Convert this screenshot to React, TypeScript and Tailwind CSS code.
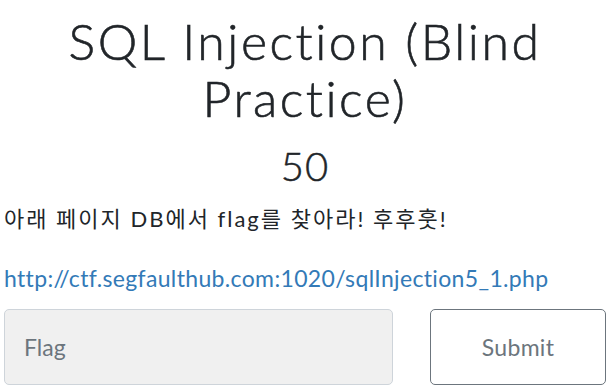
export default function App() {
  return (
    <div className="min-h-screen bg-white text-[#212529] px-1" style={{ fontFamily: 'Lato, "Noto Sans CJK KR", sans-serif' }}>
      <h1 className="pt-[13px] text-center text-[50px] leading-[57px] font-light tracking-[2.5px] [-webkit-text-stroke:0.6px_#212529]">SQL Injection (Blind Practice)</h1>
      <h2 className="mt-[15px] text-center text-[40px] leading-[48px] font-light tracking-[1px] [-webkit-text-stroke:0.5px_#212529]">50</h2>
      <p className="mt-[12px] text-[22px] leading-[33px] tracking-[2px]">아래 페이지 DB에서 flag를 찾아라! 후후훗!</p>
      <p className="mt-[26px] text-[23px] leading-[34px] tracking-[0.35px]">
        <a href="#" className="text-[#337ab7]">http://ctf.segfaulthub.com:1020/sqlInjection5_1.php</a>
      </p>
      <form className="mt-[14px] flex gap-[37px]" onSubmit={(e) => e.preventDefault()}>
        <input
          placeholder="Flag"
          className="w-[389px] h-[76px] rounded-[5px] border border-[#ced4da] bg-[#f0f0f0] px-[19px] text-[23px] text-[#495057] placeholder:text-[#6c757d] outline-none"
        />
        <button
          type="submit"
          className="w-[176px] h-[76px] rounded-[5px] border border-[#6c757d] bg-white text-[23px] tracking-[0.3px] text-[#6c757d]"
        >
          Submit
        </button>
      </form>
    </div>
  );
}
